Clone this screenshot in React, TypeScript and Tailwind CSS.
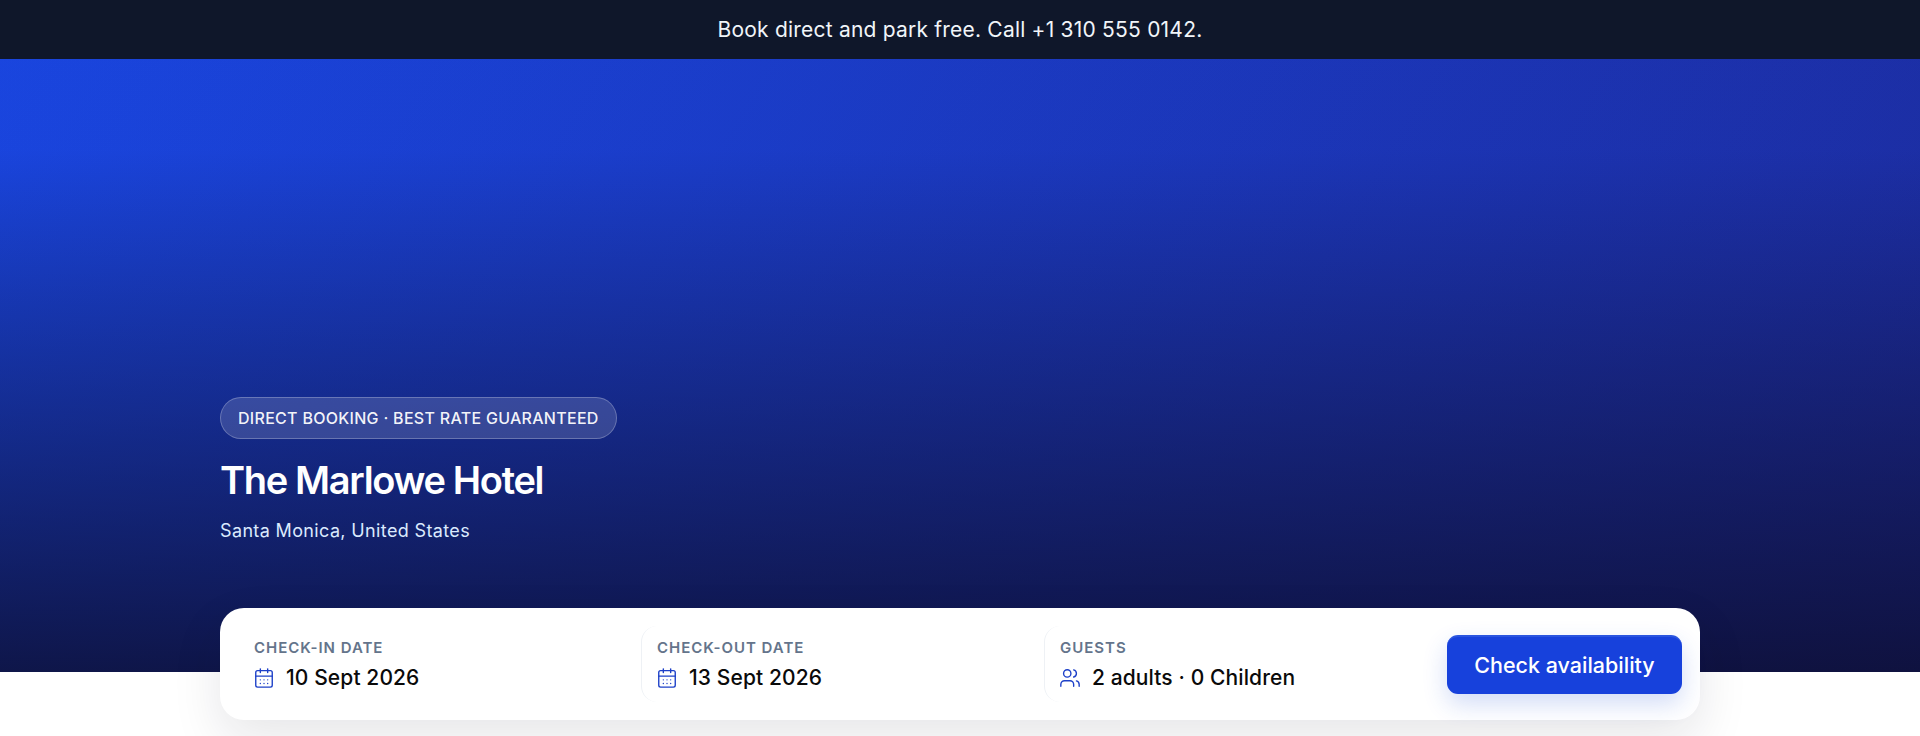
import { CalendarDays, Users } from "lucide-react";

const font = "font-['Inter','Liberation_Sans',sans-serif]";

function Field({ label, value, icon }: { label: string; value: string; icon: "calendar" | "users" }) {
  const Icon = icon === "calendar" ? CalendarDays : Users;
  return (
    <div className="flex h-[76px] flex-1 flex-col justify-center gap-[6px] rounded-2xl border-l border-[#eef1f5] pt-[2px] pr-4 pl-[15px] first:border-transparent">
      <span className="text-[15px] leading-5 font-semibold tracking-[0.065em] text-[#64748b]">{label}</span>
      <div className="flex items-center gap-[11px]">
        <Icon className="-ml-px h-[22px] w-[22px] text-[#1d40c8]" strokeWidth={1.5} />
        <span className="text-[21px] leading-7 font-medium tracking-[0.005em] text-[#0a0a0a]">{value}</span>
      </div>
    </div>
  );
}

export default function App() {
  return (
    <div className={`h-[736px] overflow-hidden bg-white ${font}`}>
      <div className="flex h-[59px] items-center justify-center bg-[#0f172a] text-[21px] tracking-[0.01em] text-[#f1f5f9]">
        Book direct and park free. Call +1 310 555 0142.
      </div>
      <section className="h-[613px] bg-[linear-gradient(180deg,rgba(12,12,42,0.03)_15%,rgba(12,12,42,0.82)_100%),linear-gradient(120deg,#1a47e4_0%,#1d2ca0_100%)]">
        <div className="mx-auto flex h-full w-[1480px] flex-col items-start justify-end pb-[127px]">
          <span className="rounded-full border border-white/25 bg-white/15 px-[17px] py-[9px] text-base leading-[22px] font-medium tracking-[0.018em] text-white/95">
            DIRECT BOOKING · BEST RATE GUARANTEED
          </span>
          <h1 className="mt-[17px] text-[38px] leading-[48px] font-semibold tracking-[-0.035em] text-white">The Marlowe Hotel</h1>
          <p className="mt-[13px] text-lg leading-7 tracking-[0.02em] text-[#dbeafe]">Santa Monica, United States</p>
        </div>
      </section>
      <div className="relative mx-auto -mt-16 flex h-28 w-[1480px] items-center rounded-3xl bg-white px-[18px] shadow-[0_20px_50px_rgba(15,23,42,0.1)]">
        <Field label="CHECK-IN DATE" value="10 Sept 2026" icon="calendar" />
        <Field label="CHECK-OUT DATE" value="13 Sept 2026" icon="calendar" />
        <Field label="GUESTS" value="2 adults · 0 Children" icon="users" />
        <button className="h-[59px] w-[235px] shrink-0 rounded-[11px] border-t-2 border-[#2a55e0] bg-[#1741dc] text-[21.5px] font-medium text-white shadow-[0_10px_24px_rgba(29,78,216,0.2)]">
          Check availability
        </button>
      </div>
    </div>
  );
}
